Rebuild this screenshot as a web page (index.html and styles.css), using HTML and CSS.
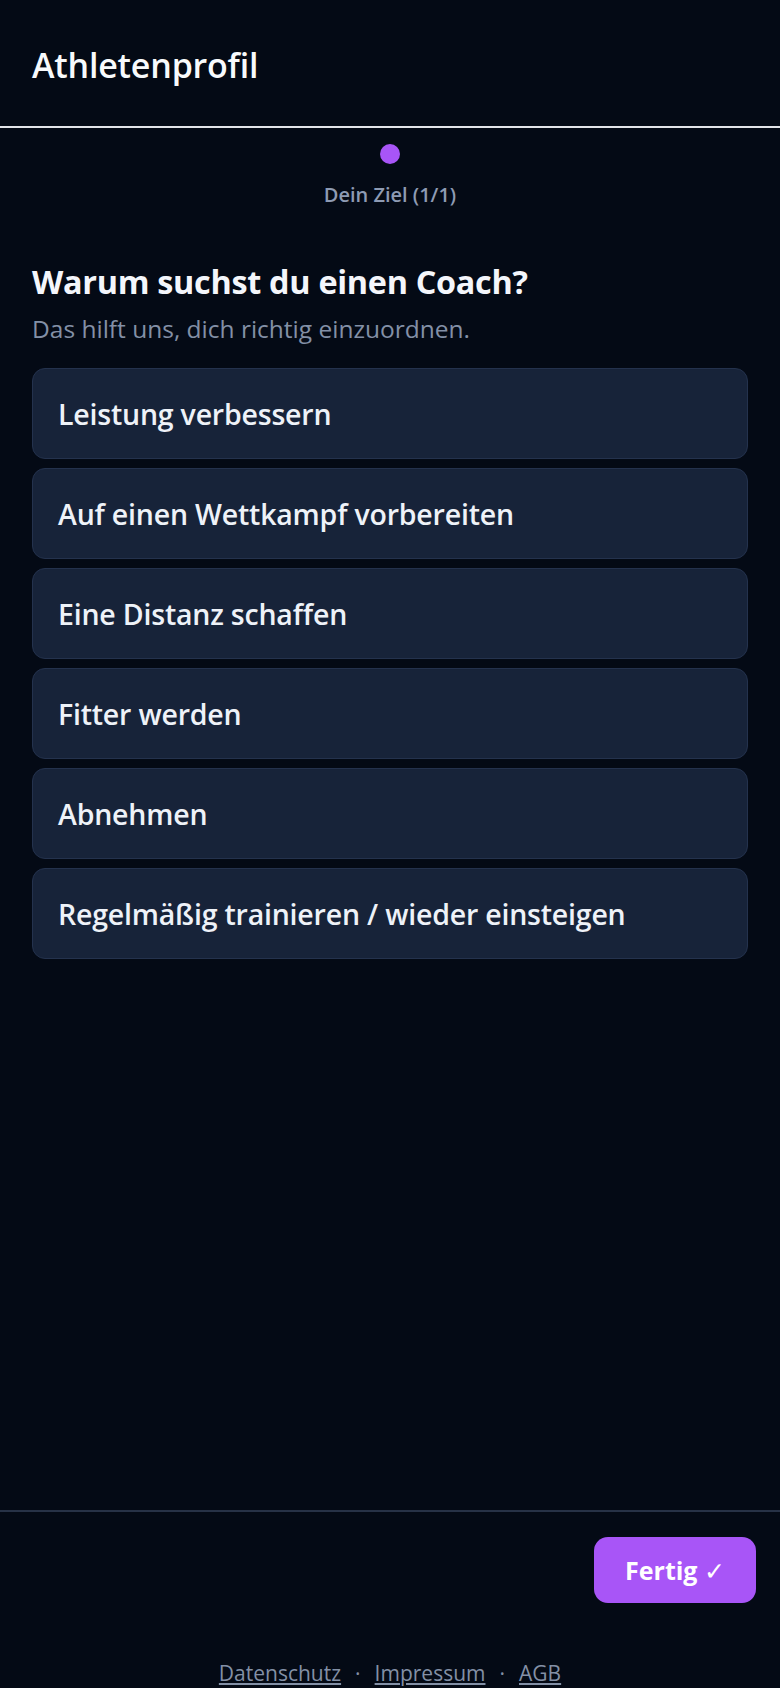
FILE: index.html
```html
<!DOCTYPE html>
<html lang="de">
<head>
<meta charset="utf-8">
<title>Athletenprofil</title>
<link rel="stylesheet" href="styles.css">
</head>
<body>
<div class="page">
  <header class="topbar">
    <h1 class="title">Athletenprofil</h1>
  </header>
  <div class="progress">
    <span class="dot"></span>
    <span class="step">Dein Ziel (1/1)</span>
  </div>
  <main class="content">
    <h2 class="question">Warum suchst du einen Coach?</h2>
    <p class="hint">Das hilft uns, dich richtig einzuordnen.</p>
    <div class="options">
      <button class="option">Leistung verbessern</button>
      <button class="option">Auf einen Wettkampf vorbereiten</button>
      <button class="option">Eine Distanz schaffen</button>
      <button class="option">Fitter werden</button>
      <button class="option">Abnehmen</button>
      <button class="option">Regelmäßig trainieren / wieder einsteigen</button>
    </div>
  </main>
  <footer class="actions">
    <button class="done">Fertig <span class="check">✓</span></button>
  </footer>
  <nav class="legal">
    <a href="#">Datenschutz</a><span class="sep">·</span><a href="#">Impressum</a><span class="sep">·</span><a href="#">AGB</a>
  </nav>
</div>
</body>
</html>
```

FILE: styles.css
```css
* { box-sizing: border-box; }
html, body {
  margin: 0;
  padding: 0;
  background: #040a15;
}
body {
  font-family: "Open Sans", "Noto Sans", sans-serif;
  color: #f1f5f9;
}
.page {
  display: flex;
  flex-direction: column;
  height: 1688px;
  overflow: hidden;
}
.topbar {
  height: 128px;
  flex: none;
  border-bottom: 2px solid #e2e4e8;
  display: flex;
  align-items: center;
  padding: 4px 32px 0;
}
.title {
  margin: 0;
  font-size: 34px;
  font-weight: 600;
  color: #f8fafc;
  letter-spacing: -0.2px;
}
.progress {
  display: flex;
  flex-direction: column;
  align-items: center;
  padding-top: 16px;
}
.dot {
  width: 20px;
  height: 20px;
  border-radius: 50%;
  background: #a855f7;
}
.step {
  margin-top: 17px;
  font-size: 20px;
  font-weight: 600;
  color: #8e9bb3;
  line-height: 28px;
}
.content {
  flex: 1;
  padding: 52px 32px 0;
}
.question {
  margin: 0;
  font-size: 32.4px;
  font-weight: 700;
  color: #f4f6fb;
  line-height: 40px;
  letter-spacing: -0.3px;
}
.hint {
  margin: 12px 0 0;
  font-size: 24.5px;
  color: #8390a6;
  line-height: 32px;
}
.options {
  margin-top: 23px;
  display: flex;
  flex-direction: column;
  gap: 9px;
}
.option {
  height: 91px;
  text-align: left;
  padding: 0 25px;
  background: #172339;
  border: 1px solid #24324d;
  border-radius: 13px;
  font-family: inherit;
  font-size: 28.5px;
  font-weight: 600;
  color: #eef2f8;
  letter-spacing: -0.2px;
}
.actions {
  flex: none;
  border-top: 2px solid #273246;
  display: flex;
  justify-content: flex-end;
  padding: 25px 24px 0;
  height: 118px;
}
.done {
  height: 66px;
  padding: 0 31px;
  border: none;
  border-radius: 14px;
  background: #a855f7;
  color: #ffffff;
  font-family: inherit;
  font-size: 25px;
  font-weight: 700;
}
.check {
  font-weight: 400;
}
.legal {
  flex: none;
  display: flex;
  justify-content: center;
  align-items: flex-start;
  gap: 14px;
  height: 60px;
  padding-top: 31px;
  font-size: 21px;
}
.legal a {
  color: #8390a6;
  text-decoration: underline;
}
.sep {
  color: #8390a6;
}
```
